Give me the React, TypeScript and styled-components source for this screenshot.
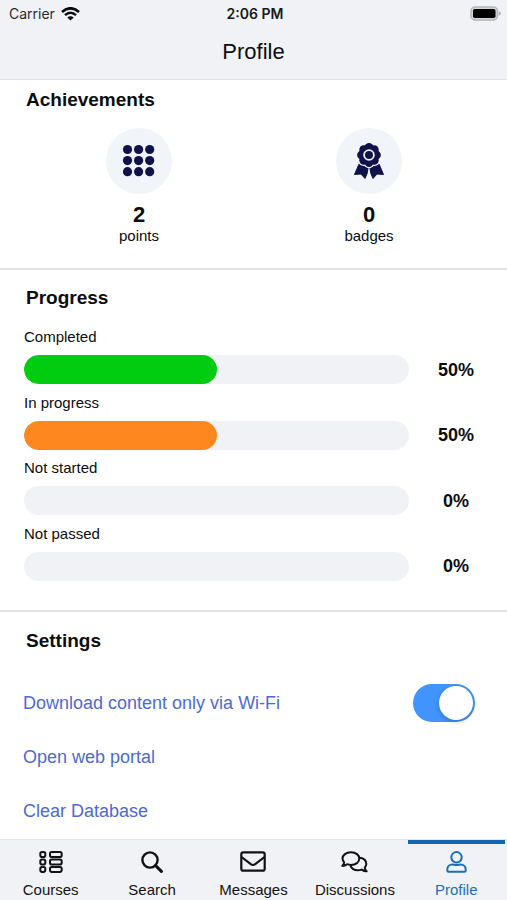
import React, { useState } from "react";
import styled, { createGlobalStyle } from "styled-components";

const GlobalStyle = createGlobalStyle`
  * { box-sizing: border-box; }
  body {
    margin: 0;
    background: #fff;
    color: #0c0d0f;
    font-family: "Liberation Sans", Arial, sans-serif;
  }
  h1, h2, p, ul, dl, dd { margin: 0; padding: 0; }
`;

const Screen = styled.div`
  display: flex;
  flex-direction: column;
  height: 100vh;
`;

const Header = styled.header`
  flex: none;
  background: #f1f2f6;
  border-bottom: 1px solid #e2e4e7;
`;

const StatusBar = styled.div`
  display: grid;
  grid-template-columns: 1fr auto 1fr;
  align-items: center;
  height: 27px;
  padding: 0 6px 0 9px;
  font: 14px Inter, sans-serif;
  color: #2a2b2e;
`;

const Carrier = styled.div`
  display: flex;
  align-items: center;
  gap: 6px;
`;

const Clock = styled.time`
  font-weight: 600;
  color: #17181a;
`;

const Battery = styled.svg`
  justify-self: end;
`;

const Title = styled.h1`
  height: 52px;
  font-size: 22px;
  font-weight: 400;
  line-height: 50px;
  text-align: center;
`;

const Content = styled.main`
  flex: 1;
  min-height: 0;
  overflow-y: auto;
  scrollbar-width: none;
`;

const Section = styled.section<{ $top: number; $bottom: number }>`
  padding-top: ${(p) => p.$top}px;
  padding-bottom: ${(p) => p.$bottom}px;
  & + & {
    border-top: 2px solid #dfe1e3;
  }
`;

const Heading = styled.h2`
  padding-left: 26px;
  font-size: 19px;
  line-height: 24px;
`;

const Stats = styled.div`
  display: grid;
  grid-template-columns: 1fr 1fr;
  padding: 16px 23px 0 24px;
`;

const Stat = styled.div`
  display: flex;
  flex-direction: column;
  align-items: center;
`;

const StatIcon = styled.div`
  width: 66px;
  height: 66px;
  margin-bottom: 8px;
  border-radius: 50%;
  background: #f1f4f9;
`;

const StatValue = styled.strong`
  font-size: 22px;
  line-height: 26px;
`;

const StatLabel = styled.span`
  font-size: 15px;
  line-height: 16px;
`;

const ProgressList = styled.ul`
  display: grid;
  grid-auto-rows: 1fr;
  min-height: 262px;
  margin-top: 18px;
  padding: 0 4px 0 24px;
  list-style: none;
`;

const ProgressItem = styled.li`
  font-size: 15px;
  line-height: 18px;
`;

const BarRow = styled.div`
  display: flex;
  align-items: center;
  margin-top: 9px;
`;

const Track = styled.div`
  flex: 1;
  height: 29px;
  overflow: hidden;
  border-radius: 15px;
  background: #f1f2f6;
`;

const Fill = styled.div<{ $color: string }>`
  height: 100%;
  border-radius: 15px;
  background: ${(p) => p.$color};
`;

const Percent = styled.strong`
  width: 94px;
  font-size: 18px;
  text-align: center;
`;

const SettingsList = styled.div`
  display: flex;
  flex-direction: column;
  padding: 23px 32px 0 23px;
`;

const settingText = `
  display: flex;
  align-items: center;
  min-height: 54px;
  padding: 0;
  border: 0;
  background: none;
  color: #4e69d3;
  font: 18px "Liberation Sans", Arial, sans-serif;
  text-align: left;
  text-decoration: none;
`;

const SettingToggle = styled.label`
  ${settingText}
  justify-content: space-between;
`;

const SettingLink = styled.a`
  ${settingText}
`;

const SettingButton = styled.button`
  ${settingText}
`;

const Switch = styled.input`
  appearance: none;
  display: flex;
  flex: none;
  width: 62px;
  height: 38px;
  margin: 0;
  padding: 2px;
  border-radius: 19px;
  background: #d5d8de;
  &::before {
    content: "";
    width: 34px;
    height: 34px;
    border-radius: 50%;
    background: #fff;
    box-shadow: 0 2px 4px rgba(0, 0, 0, 0.2);
  }
  &:checked {
    justify-content: flex-end;
    background: #4094fc;
  }
`;

const TabBar = styled.nav`
  display: grid;
  grid-template-columns: repeat(5, 1fr);
  flex: none;
  height: 61px;
  border-top: 1px solid #e2e4e8;
  background: #f1f2f6;
`;

const Tab = styled.a<{ $active?: boolean }>`
  display: flex;
  flex-direction: column;
  align-items: center;
  margin: 0 2px;
  border-top: 4px solid ${(p) => (p.$active ? "#1466ae" : "transparent")};
  color: ${(p) => (p.$active ? "#1a6fb8" : "#111214")};
  font-size: 15px;
  line-height: 18px;
  text-decoration: none;
`;

const TabIcon = styled.span`
  display: flex;
  align-items: center;
  justify-content: center;
  height: 35px;
  margin-bottom: 2px;
`;

const WifiIcon = () => (
  <svg width="19" height="14" viewBox="0 0 19 14" fill="none" stroke="#08090a" aria-hidden="true">
    <path d="M1 5Q9.500-2.400 18 5" strokeWidth="2.700" />
    <path d="M4 8.200Q9.500 3.200 15 8.200" strokeWidth="2.500" />
    <path d="M6.300 10.400Q9.500 8 12.700 10.400L9.500 13.600Z" fill="#08090a" stroke="none" />
  </svg>
);

const BatteryIcon = () => (
  <Battery width="31" height="15" viewBox="0 0 31 15" role="img" aria-label="Battery full">
    <rect x="1" y="1" width="26.500" height="13" rx="4" fill="#d4d5d7" stroke="#b4b5b7" strokeWidth="1.400" />
    <rect x="3" y="3" width="22.500" height="9" rx="1.800" fill="#000" />
    <path d="M28.800 5.200Q31 6 31 7.500T28.800 9.800Z" fill="#aeb0b2" />
  </Battery>
);

const PointsIcon = () => (
  <svg width="66" height="66" viewBox="0 0 66 66" fill="#12124a" aria-hidden="true">
    {[21.5, 32.6, 43.7].flatMap((y) =>
      [21.5, 32.6, 43.7].map((x) => <circle key={`${x}-${y}`} cx={x} cy={y} r="4.600" />)
    )}
  </svg>
);

const petals = Array.from({ length: 8 }, (_, i) => {
  const a = ((i * 45 - 90) * Math.PI) / 180;
  return { x: 33 + 7.6 * Math.cos(a), y: 27 + 7.6 * Math.sin(a) };
});

const BadgeIcon = () => (
  <svg width="66" height="66" viewBox="0 0 66 66" fill="#12124a" aria-hidden="true">
    <g stroke="#12124a" strokeLinejoin="round">
      <path d="M23 36L18.500 46.500L25 46L29 50.500L33 41L37 50.500L41 46L47.500 46.500L43 36Z" />
    </g>
    <g fill="#f1f4f9">
      {petals.map((p, i) => (
        <circle key={i} cx={p.x} cy={p.y} r="5.600" />
      ))}
      <path d="M33 37L31.800 45H34.200Z" />
    </g>
    {petals.map((p, i) => (
      <circle key={i} cx={p.x} cy={p.y} r="4.300" />
    ))}
    <circle cx="33" cy="27" r="10.200" />
    <circle cx="33" cy="27" r="4.900" fill="none" stroke="#f1f4f9" strokeWidth="1.800" />
  </svg>
);

const CoursesIcon = () => (
  <svg width="24" height="22" viewBox="0 0 24 22" fill="none" stroke="currentColor" strokeWidth="2" aria-hidden="true">
    {[1.1, 8.5, 15.9].map((y) => (
      <g key={y}>
        <rect x="1.300" y={y} width="5" height="5" rx="1.800" />
        <rect x="11" y={y} width="11.700" height="5" rx="1.800" />
      </g>
    ))}
  </svg>
);

const SearchIcon = () => (
  <svg width="22" height="22" viewBox="0 0 22 22" fill="none" stroke="currentColor" aria-hidden="true">
    <circle cx="9" cy="9" r="7.600" strokeWidth="2.400" />
    <path d="M14.600 14.600L20.400 20.400" strokeWidth="3" strokeLinecap="round" />
  </svg>
);

const MessagesIcon = () => (
  <svg width="26" height="21" viewBox="0 0 26 21" fill="none" stroke="currentColor" strokeWidth="2.200" strokeLinejoin="round" aria-hidden="true">
    <rect x="1.300" y="1.300" width="23.400" height="18.400" rx="2" />
    <path d="M1.500 6L10.800 13.200Q13 14.800 15.200 13.200L24.500 6" />
  </svg>
);

const DiscussionsIcon = () => (
  <svg width="27" height="22" viewBox="0 0 27 22" fill="none" stroke="currentColor" strokeWidth="2" strokeLinejoin="round" aria-hidden="true">
    <path d="M10 1.300C14.900 1.300 18.300 4 18.300 7.600C18.300 11.200 14.900 13.900 10 13.900C8.600 13.900 7.300 13.700 6.200 13.200C4.900 14.200 3.300 14.900 1.300 14.900C2.300 13.900 3 12.700 3.200 11.300C2.200 10.200 1.500 9 1.500 7.600C1.500 4 5.100 1.300 10 1.300Z" />
    <path d="M18.600 6.700C22.600 7.200 25.300 9.700 25.300 12.900C25.300 14.400 24.700 15.600 23.700 16.600C24 18 24.700 19.200 25.700 20.300C23.700 20.300 22 19.600 20.700 18.600C19.600 19 18.400 19.300 17 19.300C13.300 19.300 10.400 17.400 9.300 14.400" />
  </svg>
);

const ProfileIcon = () => (
  <svg width="21" height="22" viewBox="0 0 21 22" fill="none" stroke="currentColor" strokeWidth="2" strokeLinejoin="round" aria-hidden="true">
    <circle cx="10.500" cy="6.300" r="5.200" />
    <path d="M6.400 13.500C7.800 13.500 8.600 14.100 10.500 14.100S13.200 13.500 14.600 13.500C17.600 13.500 19.700 15.700 19.700 18.300V19.300Q19.700 20.800 18.200 20.800H2.800Q1.300 20.800 1.300 19.300V18.300C1.300 15.700 3.400 13.500 6.400 13.500Z" />
  </svg>
);

const progress = [
  { label: "Completed", value: 50, color: "#00cd10" },
  { label: "In progress", value: 50, color: "#ff871f" },
  { label: "Not started", value: 0, color: "#9aa0aa" },
  { label: "Not passed", value: 0, color: "#d33b3b" },
];

const tabs = [
  { label: "Courses", icon: <CoursesIcon /> },
  { label: "Search", icon: <SearchIcon /> },
  { label: "Messages", icon: <MessagesIcon /> },
  { label: "Discussions", icon: <DiscussionsIcon /> },
  { label: "Profile", icon: <ProfileIcon />, active: true },
];

export default function App() {
  const [wifiOnly, setWifiOnly] = useState(true);
  return (
    <Screen>
      <GlobalStyle />
      <Header>
        <StatusBar>
          <Carrier>
            Carrier <WifiIcon />
          </Carrier>
          <Clock>2:06 PM</Clock>
          <BatteryIcon />
        </StatusBar>
        <Title>Profile</Title>
      </Header>
      <Content>
        <Section $top={8} $bottom={24}>
          <Heading>Achievements</Heading>
          <Stats>
            <Stat>
              <StatIcon><PointsIcon /></StatIcon>
              <StatValue>2</StatValue>
              <StatLabel>points</StatLabel>
            </Stat>
            <Stat>
              <StatIcon><BadgeIcon /></StatIcon>
              <StatValue>0</StatValue>
              <StatLabel>badges</StatLabel>
            </Stat>
          </Stats>
        </Section>
        <Section $top={16} $bottom={20}>
          <Heading>Progress</Heading>
          <ProgressList>
            {progress.map((p) => (
              <ProgressItem key={p.label}>
                {p.label}
                <BarRow>
                  <Track role="progressbar" aria-label={p.label} aria-valuenow={p.value}>
                    <Fill $color={p.color} style={{ width: `${p.value}%` }} />
                  </Track>
                  <Percent>{p.value}%</Percent>
                </BarRow>
              </ProgressItem>
            ))}
          </ProgressList>
        </Section>
        <Section $top={17} $bottom={16}>
          <Heading>Settings</Heading>
          <SettingsList>
            <SettingToggle>
              Download content only via Wi-Fi
              <Switch
                type="checkbox"
                role="switch"
                checked={wifiOnly}
                onChange={(e) => setWifiOnly(e.target.checked)}
              />
            </SettingToggle>
            <SettingLink href="#portal">Open web portal</SettingLink>
            <SettingButton type="button">Clear Database</SettingButton>
          </SettingsList>
        </Section>
      </Content>
      <TabBar>
        {tabs.map((t) => (
          <Tab
            key={t.label}
            href={`#${t.label.toLowerCase()}`}
            $active={t.active}
            aria-current={t.active ? "page" : undefined}
          >
            <TabIcon>{t.icon}</TabIcon>
            {t.label}
          </Tab>
        ))}
      </TabBar>
    </Screen>
  );
}
